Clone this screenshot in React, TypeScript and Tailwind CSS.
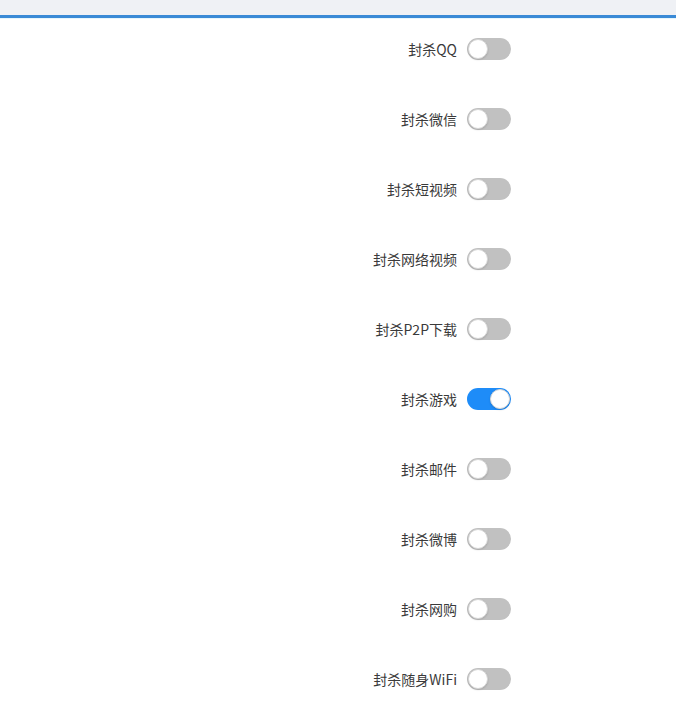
import React, { useState } from 'react';

const items = [
  { label: '封杀QQ', on: false },
  { label: '封杀微信', on: false },
  { label: '封杀短视频', on: false },
  { label: '封杀网络视频', on: false },
  { label: '封杀P2P下载', on: false },
  { label: '封杀游戏', on: true },
  { label: '封杀邮件', on: false },
  { label: '封杀微博', on: false },
  { label: '封杀网购', on: false },
  { label: '封杀随身WiFi', on: false },
];

const Switch: React.FC<{ on: boolean; onToggle: () => void }> = ({ on, onToggle }) => (
  <button
    type="button"
    onClick={onToggle}
    className={`relative flex h-[22px] w-[44px] shrink-0 items-center rounded-full px-px ${
      on ? 'justify-end bg-[#1e8cf8]' : 'justify-start bg-[#c1c1c1]'
    }`}
  >
    <span className="block h-[20px] w-[20px] rounded-full border border-[#d6d6d6] bg-white shadow-[0_1px_2px_rgba(0,0,0,0.15)]" />
  </button>
);

export default function App() {
  const [state, setState] = useState(items.map((i) => i.on));

  return (
    <div className="min-h-[719px] w-full bg-white font-['Noto_Sans_CJK_SC','Microsoft_YaHei',sans-serif] text-[14px] text-[#3a3a3a]">
      <div className="h-[15px] bg-[#eff1f5]" />
      <div className="h-[3px] bg-[#3a8ad6]" />
      <div className="h-px bg-[#e6f6fc]" />
      <div className="flex flex-col gap-[48px] pt-[19px]">
        {items.map((item, i) => (
          <div key={item.label} className="flex h-[22px] items-center">
            <label className="w-[457px] text-right leading-[22px]">{item.label}</label>
            <div className="ml-[10px]">
              <Switch
                on={state[i]}
                onToggle={() => setState((s) => s.map((v, j) => (j === i ? !v : v)))}
              />
            </div>
          </div>
        ))}
      </div>
    </div>
  );
}
